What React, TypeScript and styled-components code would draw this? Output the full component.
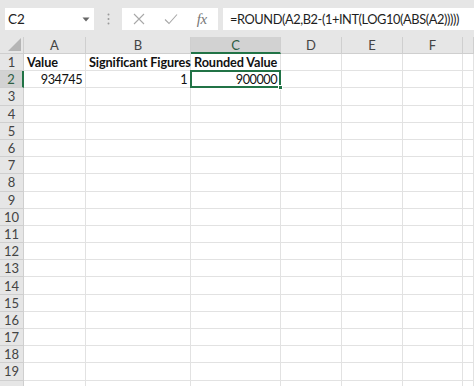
import React from "react";
import styled, { createGlobalStyle } from "styled-components";

const GlobalStyle = createGlobalStyle`
  html, body { margin: 0; padding: 0; background: #ffffff; }
  body { overflow: hidden; font-family: Lato, "Noto Sans", sans-serif; }
`;

const GREEN = "#217346";
const GRID = "#e2e2e2";
const HEAD_LINE = "#cfcfcf";

const Window = styled.div`
  width: 474px;
  height: 386px;
  display: flex;
  flex-direction: column;
  overflow: hidden;
  background: #ffffff;
`;

const TopBar = styled.div`
  height: 37px;
  flex: 0 0 37px;
  background: #e6e6e6;
  display: flex;
  align-items: center;
  padding: 0 0 0 5px;
  box-sizing: border-box;
`;

const NameBox = styled.div`
  width: 89px;
  height: 22px;
  background: #ffffff;
  display: flex;
  align-items: center;
  justify-content: space-between;
  padding: 0 4px 0 3px;
  box-sizing: border-box;
  margin-top: 1px;
`;

const NameText = styled.span`
  font-family: Lato, sans-serif;
  font-size: 13.5px;
  color: #222;
`;

const Dots = styled.div`
  width: 28px;
  display: flex;
  justify-content: center;
  align-items: center;
`;

const FxGroup = styled.div`
  width: 96px;
  height: 22px;
  background: #ffffff;
  display: flex;
  align-items: center;
  justify-content: space-around;
  padding: 0 2px;
  box-sizing: border-box;
  margin-top: 1px;
`;

const FxLabel = styled.span`
  font-family: "Liberation Serif", serif;
  font-style: italic;
  font-size: 15px;
  color: #777;
  letter-spacing: -0.5px;
`;

const FormulaInput = styled.div`
  flex: 1;
  height: 22px;
  margin-left: 5px;
  margin-top: 1px;
  background: #ffffff;
  display: flex;
  align-items: center;
  padding-left: 7px;
  font-family: Lato, sans-serif;
  font-size: 12.8px;
  letter-spacing: -0.42px;
  color: #1e1e1e;
  white-space: nowrap;
  overflow: hidden;
`;

const Sheet = styled.div`
  flex: 1;
  display: grid;
  grid-template-columns: 24px 62px 105px 90px 61px 61px 60px 1fr;
  grid-template-rows: 17px;
  grid-auto-rows: 17.2px;
  overflow: hidden;
`;

const Corner = styled.div`
  background: #e6e6e6;
  border-right: 1px solid ${HEAD_LINE};
  border-bottom: 1px solid ${HEAD_LINE};
  box-sizing: border-box;
  display: flex;
  align-items: flex-end;
  justify-content: flex-end;
  padding: 0 2px 2px 0;
`;

const ColHeader = styled.div<{ $active?: boolean }>`
  background: ${(p) => (p.$active ? "#d2d2d2" : "#e6e6e6")};
  border-right: 1px solid ${HEAD_LINE};
  border-bottom: ${(p) => (p.$active ? `2px solid ${GREEN}` : `1px solid ${HEAD_LINE}`)};
  box-sizing: border-box;
  display: flex;
  align-items: center;
  justify-content: center;
  font-family: Lato, sans-serif;
  font-size: 13px;
  color: ${(p) => (p.$active ? "#2e5e43" : "#444")};
  padding-top: ${(p) => (p.$active ? "1px" : "0")};
`;

const RowHeader = styled.div<{ $active?: boolean }>`
  background: ${(p) => (p.$active ? "#d2d2d2" : "#e6e6e6")};
  border-right: ${(p) => (p.$active ? `2px solid ${GREEN}` : `1px solid ${HEAD_LINE}`)};
  border-bottom: 1px solid ${HEAD_LINE};
  box-sizing: border-box;
  display: flex;
  align-items: center;
  justify-content: center;
  font-family: Lato, sans-serif;
  font-size: 13px;
  color: ${(p) => (p.$active ? "#2e5e43" : "#444")};
`;

const Cell = styled.div<{ $align?: "left" | "right"; $bold?: boolean; $selected?: boolean }>`
  border-right: 1px solid ${GRID};
  border-bottom: 1px solid ${GRID};
  box-sizing: border-box;
  display: flex;
  align-items: center;
  justify-content: ${(p) => (p.$align === "right" ? "flex-end" : "flex-start")};
  padding: 0 3px 0 3px;
  font-family: Lato, sans-serif;
  font-size: 12.7px;
  font-weight: ${(p) => (p.$bold ? 700 : 400)};
  letter-spacing: ${(p) => (p.$bold ? "-0.1px" : "-0.5px")};
  color: #111;
  white-space: nowrap;
  overflow: visible;
  position: relative;
  ${(p) =>
    p.$selected &&
    `
    &::after {
      content: "";
      position: absolute;
      left: -1px;
      top: -1px;
      right: -1px;
      bottom: -1px;
      border: 2px solid ${GREEN};
      pointer-events: none;
    }
    &::before {
      content: "";
      position: absolute;
      right: -3px;
      bottom: -3px;
      width: 5px;
      height: 5px;
      background: ${GREEN};
      border: 1px solid #fff;
      box-sizing: border-box;
      z-index: 2;
    }
  `}
`;

const cols = ["A", "B", "C", "D", "E", "F", "G"];

type CellData = { text: string; align?: "left" | "right"; bold?: boolean };

const data: Record<number, CellData[]> = {
  1: [
    { text: "Value", bold: true },
    { text: "Significant Figures", bold: true },
    { text: "Rounded Value", bold: true },
  ],
  2: [
    { text: "934745", align: "right" },
    { text: "1", align: "right" },
    { text: "900000", align: "right" },
  ],
};

export default function App() {
  const rows = Array.from({ length: 19 }, (_, i) => i + 1);
  return (
    <>
      <GlobalStyle />
      <Window>
        <TopBar>
          <NameBox>
            <NameText>C2</NameText>
            <svg width="8" height="5" viewBox="0 0 8 5">
              <path d="M0.5 0.5 L7.5 0.5 L4 4.5 Z" fill="#666" />
            </svg>
          </NameBox>
          <Dots>
            <svg width="3" height="12" viewBox="0 0 3 12">
              <circle cx="1.5" cy="1.5" r="1" fill="#9a9a9a" />
              <circle cx="1.5" cy="6" r="1" fill="#9a9a9a" />
              <circle cx="1.5" cy="10.5" r="1" fill="#9a9a9a" />
            </svg>
          </Dots>
          <FxGroup>
            <svg width="12" height="12" viewBox="0 0 12 12">
              <path d="M1 1 L11 11 M11 1 L1 11" stroke="#a8a8a8" strokeWidth="1.1" fill="none" />
            </svg>
            <svg width="14" height="12" viewBox="0 0 14 12">
              <path d="M1 6.5 L5 10.5 L13 1.5" stroke="#a8a8a8" strokeWidth="1.1" fill="none" />
            </svg>
            <FxLabel>fx</FxLabel>
          </FxGroup>
          <FormulaInput>=ROUND(A2,B2-(1+INT(LOG10(ABS(A2)))))</FormulaInput>
        </TopBar>
        <Sheet>
          <Corner>
            <svg width="13" height="13" viewBox="0 0 13 13">
              <path d="M13 0 L13 13 L0 13 Z" fill="#b5b5b5" />
            </svg>
          </Corner>
          {cols.map((c) => (
            <ColHeader key={c} $active={c === "C"}>
              {c === "G" ? "" : c}
            </ColHeader>
          ))}
          {rows.map((r) => (
            <React.Fragment key={r}>
              <RowHeader $active={r === 2}>{r}</RowHeader>
              {cols.map((c, ci) => {
                const d = data[r]?.[ci];
                return (
                  <Cell
                    key={c}
                    $align={d?.align}
                    $bold={d?.bold}
                    $selected={r === 2 && c === "C"}
                  >
                    {d?.text ?? ""}
                  </Cell>
                );
              })}
            </React.Fragment>
          ))}
          <RowHeader />
          {cols.map((c) => (
            <Cell key={`last-${c}`} />
          ))}
        </Sheet>
      </Window>
    </>
  );
}
